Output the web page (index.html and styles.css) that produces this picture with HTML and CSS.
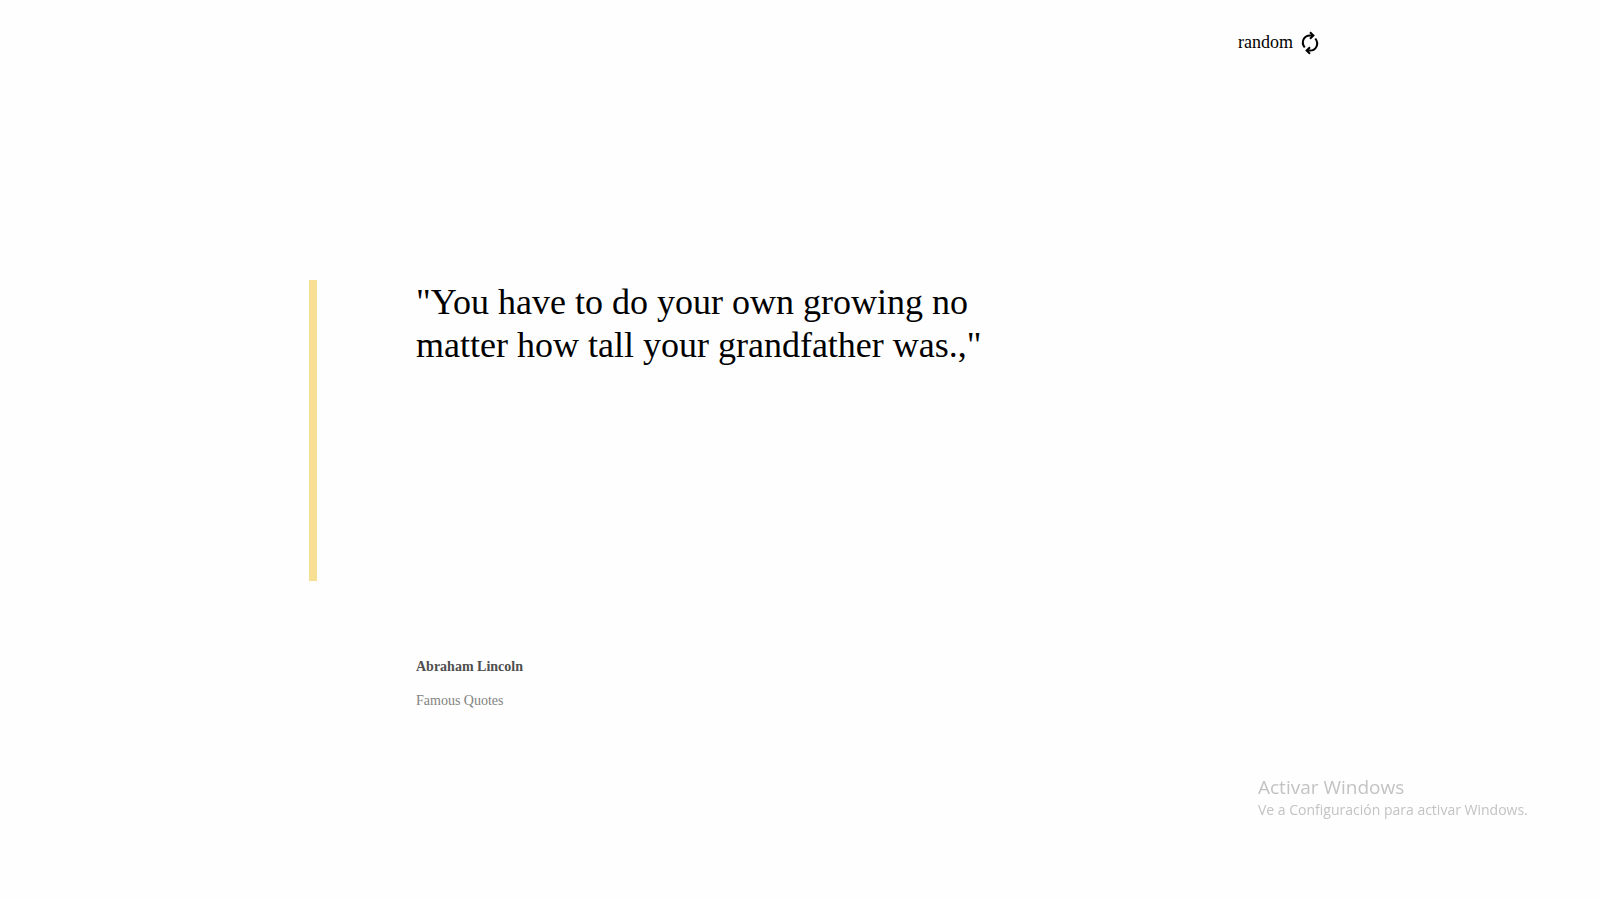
FILE: index.html
```html
<!DOCTYPE html>
<html lang="en">
<head>
<meta charset="utf-8">
<title>Random quote</title>
<link rel="stylesheet" href="styles.css">
</head>
<body>
<header class="header">
  <button class="random" type="button">random
    <svg class="random-icon" viewBox="0 0 24 24" aria-hidden="true" fill="none" stroke="currentColor" stroke-width="2">
      <path d="M6.700 16.500C2.500 11 6 4.500 12 4.500H15M17.300 7.500C21.500 13 18 19.500 12 19.500H9"/>
      <path d="M12 1.200l3.400 3.300L12 7.800M12 16.200l-3.400 3.300 3.400 3.300"/>
    </svg>
  </button>
</header>
<main class="main">
  <blockquote class="quote">"You have to do your own growing no matter how tall your grandfather was.,"</blockquote>
  <div class="credit">
    <p class="author">Abraham Lincoln</p>
    <p class="genre">Famous Quotes</p>
  </div>
</main>
<aside class="watermark">
  <p class="watermark-title">Activar Windows</p>
  <p class="watermark-text">Ve a Configuración para activar Windows.</p>
</aside>
</body>
</html>
```
FILE: styles.css
```css
* { box-sizing: border-box; }
body {
  margin: 0;
  background: #fefefe;
  color: #000;
  font-family: "Liberation Serif", "Times New Roman", serif;
}
p, blockquote { margin: 0; }
.header {
  display: flex;
  justify-content: flex-end;
  padding: 30px 278px 0 24px;
}
.random {
  display: flex;
  align-items: flex-end;
  gap: 5px;
  padding: 0;
  border: 0;
  background: none;
  color: inherit;
  font: 18px/25px "Liberation Serif", "Times New Roman", serif;
  cursor: pointer;
}
.random-icon { width: 24px; height: 24px; }
.main {
  width: 700px;
  max-width: 100%;
  margin: 225px 0 0 309px;
}
.quote {
  min-height: 301px;
  padding: 1px 0 0 99px;
  border-left: 8px solid #f7df94;
  font-size: 36px;
  line-height: 43px;
}
.credit {
  padding: 76px 0 0 107px;
  font-size: 14px;
  line-height: 20px;
}
.author { color: #4f4f4f; font-weight: bold; }
.genre { margin-top: 14px; color: #828282; }
.watermark {
  position: fixed;
  right: 64px;
  bottom: 80px;
  width: 278px;
  color: #c3c3c3;
  font-family: "Open Sans", "Noto Sans", sans-serif;
  white-space: nowrap;
}
.watermark-title { margin-bottom: 1px; font-size: 19px; line-height: 24px; }
.watermark-text { font-size: 14px; line-height: 20px; }
```
